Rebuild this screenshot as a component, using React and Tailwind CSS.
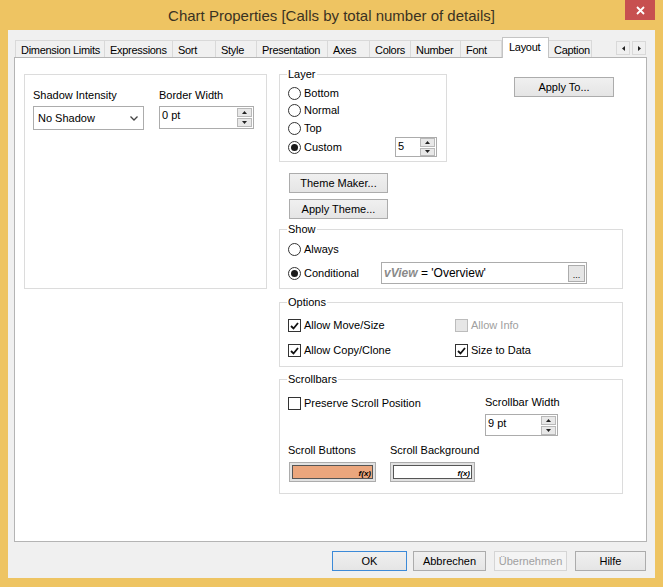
import React from "react";

const tabs = [
  ["Dimension Limits", 90],
  ["Expressions", 68],
  ["Sort", 43],
  ["Style", 41],
  ["Presentation", 71],
  ["Axes", 42],
  ["Colors", 41],
  ["Number", 50],
  ["Font", 41],
  ["Layout", 47, true],
  ["Caption", 43],
];

function Tri({ up }) {
  return (
    <svg width="5" height="3" viewBox="0 0 5 3">
      <polygon points={up ? "2.5,0 5,3 0,3" : "0,0 5,0 2.5,3"} fill="#222" />
    </svg>
  );
}

function Spin({ value, className }) {
  return (
    <div className={`flex bg-white border border-[#acacac] ${className}`}>
      <div className="flex-1 pl-[2px] pt-[2px] leading-[13px]">{value}</div>
      <div className="flex flex-col justify-center gap-[1px] pr-[1px]">
        <div className="w-[15px] h-[9px] border border-[#b9b9b9] bg-[#e8e8e8] flex items-center justify-center">
          <Tri up />
        </div>
        <div className="w-[15px] h-[9px] border border-[#b9b9b9] bg-[#e8e8e8] flex items-center justify-center">
          <Tri />
        </div>
      </div>
    </div>
  );
}

function Btn({ children, className = "", disabled, primary }) {
  const look = disabled
    ? "border-[#d5d5d5] bg-[#f4f4f4] text-[#a0a0a0]"
    : primary
    ? "border-[#3c8ad8] bg-linear-to-b from-[#f0f0f0] to-[#e5e5e5]"
    : "border-[#acacac] bg-linear-to-b from-[#f0f0f0] to-[#e5e5e5]";
  return (
    <div className={`h-[20px] flex items-center justify-center border ${look} ${className}`}>
      {children}
    </div>
  );
}

function Radio({ checked, label, className = "" }) {
  return (
    <div className={`flex items-center gap-[3px] ${className}`}>
      <div className="w-[13px] h-[13px] rounded-full border border-[#333] bg-white flex items-center justify-center">
        {checked && <div className="w-[7px] h-[7px] rounded-full bg-[#1a1a1a]" />}
      </div>
      <span>{label}</span>
    </div>
  );
}

function Check({ checked, disabled, label, className = "" }) {
  return (
    <div className={`flex items-center gap-[3px] ${className}`}>
      <div
        className={`w-[13px] h-[13px] border flex items-center justify-center ${
          disabled ? "border-[#bcbcbc] bg-[#e6e6e6]" : "border-[#333] bg-white"
        }`}
      >
        {checked && (
          <svg width="9" height="8" viewBox="0 0 9 8">
            <polyline points="1,4 3.5,6.5 8,1" fill="none" stroke="#111" strokeWidth="1.8" />
          </svg>
        )}
      </div>
      <span className={disabled ? "text-[#a0a0a0]" : ""}>{label}</span>
    </div>
  );
}

function Group({ title, className = "", children }) {
  return (
    <fieldset className={`border border-[#dcdcdc] pl-[8px] ${className}`}>
      <legend className="-ml-[1px] px-[1px] leading-[13px]">{title}</legend>
      {children}
    </fieldset>
  );
}

function Swatch({ color, className }) {
  return (
    <div className={`h-[20px] border border-[#acacac] bg-[#e1e1e1] p-[2px] ${className}`}>
      <div className="h-full border border-[#555] flex items-end justify-end" style={{ background: color }}>
        <span className="text-[8px] leading-[9px] italic font-bold pr-[1px]">f(x)</span>
      </div>
    </div>
  );
}

export default function App() {
  return (
    <div className="w-[663px] h-[587px] bg-[#eec462] flex flex-col overflow-hidden font-['Liberation_Sans',Arial,sans-serif] text-[11px] leading-[13px] text-black">
      {/* title bar */}
      <div className="h-[30px] flex shrink-0">
        <div className="w-[38px]" />
        <div className="flex-1 text-center text-[15px] leading-[31px] text-[#3a3222]">
          Chart Properties [Calls by total number of details]
        </div>
        <div className="w-[38px]">
          <div className="w-[30px] h-[20px] bg-[#c75050] flex items-center justify-center">
            <svg width="9" height="9" viewBox="0 0 9 9">
              <path d="M1 1 L8 8 M8 1 L1 8" stroke="#fff" strokeWidth="1.8" />
            </svg>
          </div>
        </div>
      </div>

      {/* client */}
      <div className="mx-[8px] h-[548px] bg-[#f0f0f0] flex flex-col shrink-0">
        {/* tabs */}
        <div className="mt-[7px] ml-[6px] w-[633px] h-[20px] flex items-end pl-[1px]">
          {tabs.map(([name, w, sel], i) =>
            sel ? (
              <div
                key={name}
                style={{ width: w }}
                className="relative z-10 -mb-px h-[21px] bg-white border-x border-t border-[#c4c4c4] pl-[6px] leading-[18px] whitespace-nowrap tracking-[-0.3px]"
              >
                {name}
              </div>
            ) : (
              <div
                key={name}
                style={{ width: w }}
                className={`h-[17px] bg-[#f0f0f0] border-t border-r border-[#d9d9d9] pl-[5px] leading-[18px] whitespace-nowrap overflow-hidden tracking-[-0.3px] ${
                  i === 0 ? "border-l" : ""
                }`}
              >
                {name}
              </div>
            )
          )}
          <div className="ml-auto mr-[1px] mb-[2px] flex gap-[2px]">
            <div className="w-[14px] h-[14px] border border-[#d9d9d9] bg-[#f0f0f0] flex items-center justify-center">
              <svg width="3" height="5" viewBox="0 0 3 5">
                <polygon points="3,0 3,5 0,2.5" fill="#222" />
              </svg>
            </div>
            <div className="w-[14px] h-[14px] border border-[#d9d9d9] bg-[#f0f0f0] flex items-center justify-center">
              <svg width="3" height="5" viewBox="0 0 3 5">
                <polygon points="0,0 3,2.5 0,5" fill="#222" />
              </svg>
            </div>
          </div>
        </div>

        {/* panel */}
        <div className="ml-[6px] w-[633px] h-[485px] border border-[#b4b4b4] bg-white flex items-start pt-[10px] pl-[9px]">
          {/* left box */}
          <div className="mt-[6px] w-[243px] h-[215px] border border-[#dcdcdc] flex gap-[15px] pl-[8px] pt-[14px]">
            <div className="w-[111px]">
              <div>Shadow Intensity</div>
              <div className="mt-[4px] h-[24px] border border-[#acacac] bg-white flex items-center pl-[4px] pr-[5px] text-[11px]">
                <span className="flex-1">No Shadow</span>
                <svg width="8" height="5" viewBox="0 0 8 5">
                  <polyline points="0.5,0.5 4,4 7.5,0.5" fill="none" stroke="#444" strokeWidth="1.3" />
                </svg>
              </div>
            </div>
            <div className="w-[95px]">
              <div>Border Width</div>
              <Spin value="0 pt" className="mt-[4px] h-[23px]" />
            </div>
          </div>

          {/* right column */}
          <div className="ml-[12px] w-[344px] flex flex-col">
            <div className="flex items-start">
              <Group title="Layer" className="w-[168px] h-[94px] pr-[9px]">
                <div className="pt-[4px]">
                  <Radio label="Bottom" className="h-[17px]" />
                  <Radio label="Normal" className="h-[17px]" />
                  <Radio label="Top" className="h-[18px]" />
                  <div className="h-[20px] flex items-center">
                    <Radio checked label="Custom" />
                    <Spin value="5" className="ml-auto w-[42px] h-[20px]" />
                  </div>
                </div>
              </Group>
              <Btn className="ml-[67px] mt-[9px] w-[100px]">Apply To...</Btn>
            </div>

            <Btn className="ml-[10px] mt-[11px] w-[99px]">Theme Maker...</Btn>
            <Btn className="ml-[10px] mt-[6px] w-[99px]">Apply Theme...</Btn>

            <Group title="Show" className="mt-[4px] h-[66px]">
              <div className="pt-[5px]">
                <Radio label="Always" className="h-[17px]" />
                <div className="mt-[4px] h-[22px] flex items-center">
                  <Radio checked label="Conditional" className="w-[93px]" />
                  <div className="w-[206px] h-[22px] border border-[#acacac] bg-white flex items-center pl-[2px] text-[12px]">
                    <span className="italic font-bold text-[#8a8a8a]">vView</span>
                    <span>&nbsp;= 'Overview'</span>
                    <div className="ml-auto mr-[1px] w-[17px] h-[17px] border border-[#acacac] bg-[#e6e6e6] flex items-end justify-center text-[9px] leading-[11px]">
                      ...
                    </div>
                  </div>
                </div>
              </div>
            </Group>

            <Group title="Options" className="mt-[7px] h-[71px]">
              <div className="pt-[8px]">
                <div className="h-[17px] flex items-center">
                  <Check checked label="Allow Move/Size" className="w-[167px]" />
                  <Check disabled label="Allow Info" />
                </div>
                <div className="mt-[8px] h-[17px] flex items-center">
                  <Check checked label="Allow Copy/Clone" className="w-[167px]" />
                  <Check checked label="Size to Data" />
                </div>
              </div>
            </Group>

            <Group title="Scrollbars" className="mt-[6px] h-[121px]">
              <div className="pt-[10px] flex items-start">
                <Check label="Preserve Scroll Position" className="w-[197px] h-[14px]" />
                <div>
                  <div>Scrollbar Width</div>
                  <Spin value="9 pt" className="mt-[5px] w-[73px] h-[22px]" />
                </div>
              </div>
              <div className="mt-[8px] flex">
                <div className="w-[102px]">
                  <div>Scroll Buttons</div>
                  <Swatch color="#eba67d" className="mt-[5px] ml-[1px] w-[87px]" />
                </div>
                <div>
                  <div>Scroll Background</div>
                  <Swatch color="#ffffff" className="mt-[5px] w-[85px]" />
                </div>
              </div>
            </Group>
          </div>
        </div>

        {/* footer buttons */}
        <div className="mt-[9px] flex justify-end pr-[9px]">
          <Btn primary className="w-[75px] mr-[6px]">OK</Btn>
          <Btn className="w-[73px] mr-[8px]">Abbrechen</Btn>
          <Btn disabled className="w-[73px] mr-[8px]">Übernehmen</Btn>
          <Btn className="w-[71px]">Hilfe</Btn>
        </div>
      </div>
    </div>
  );
}
